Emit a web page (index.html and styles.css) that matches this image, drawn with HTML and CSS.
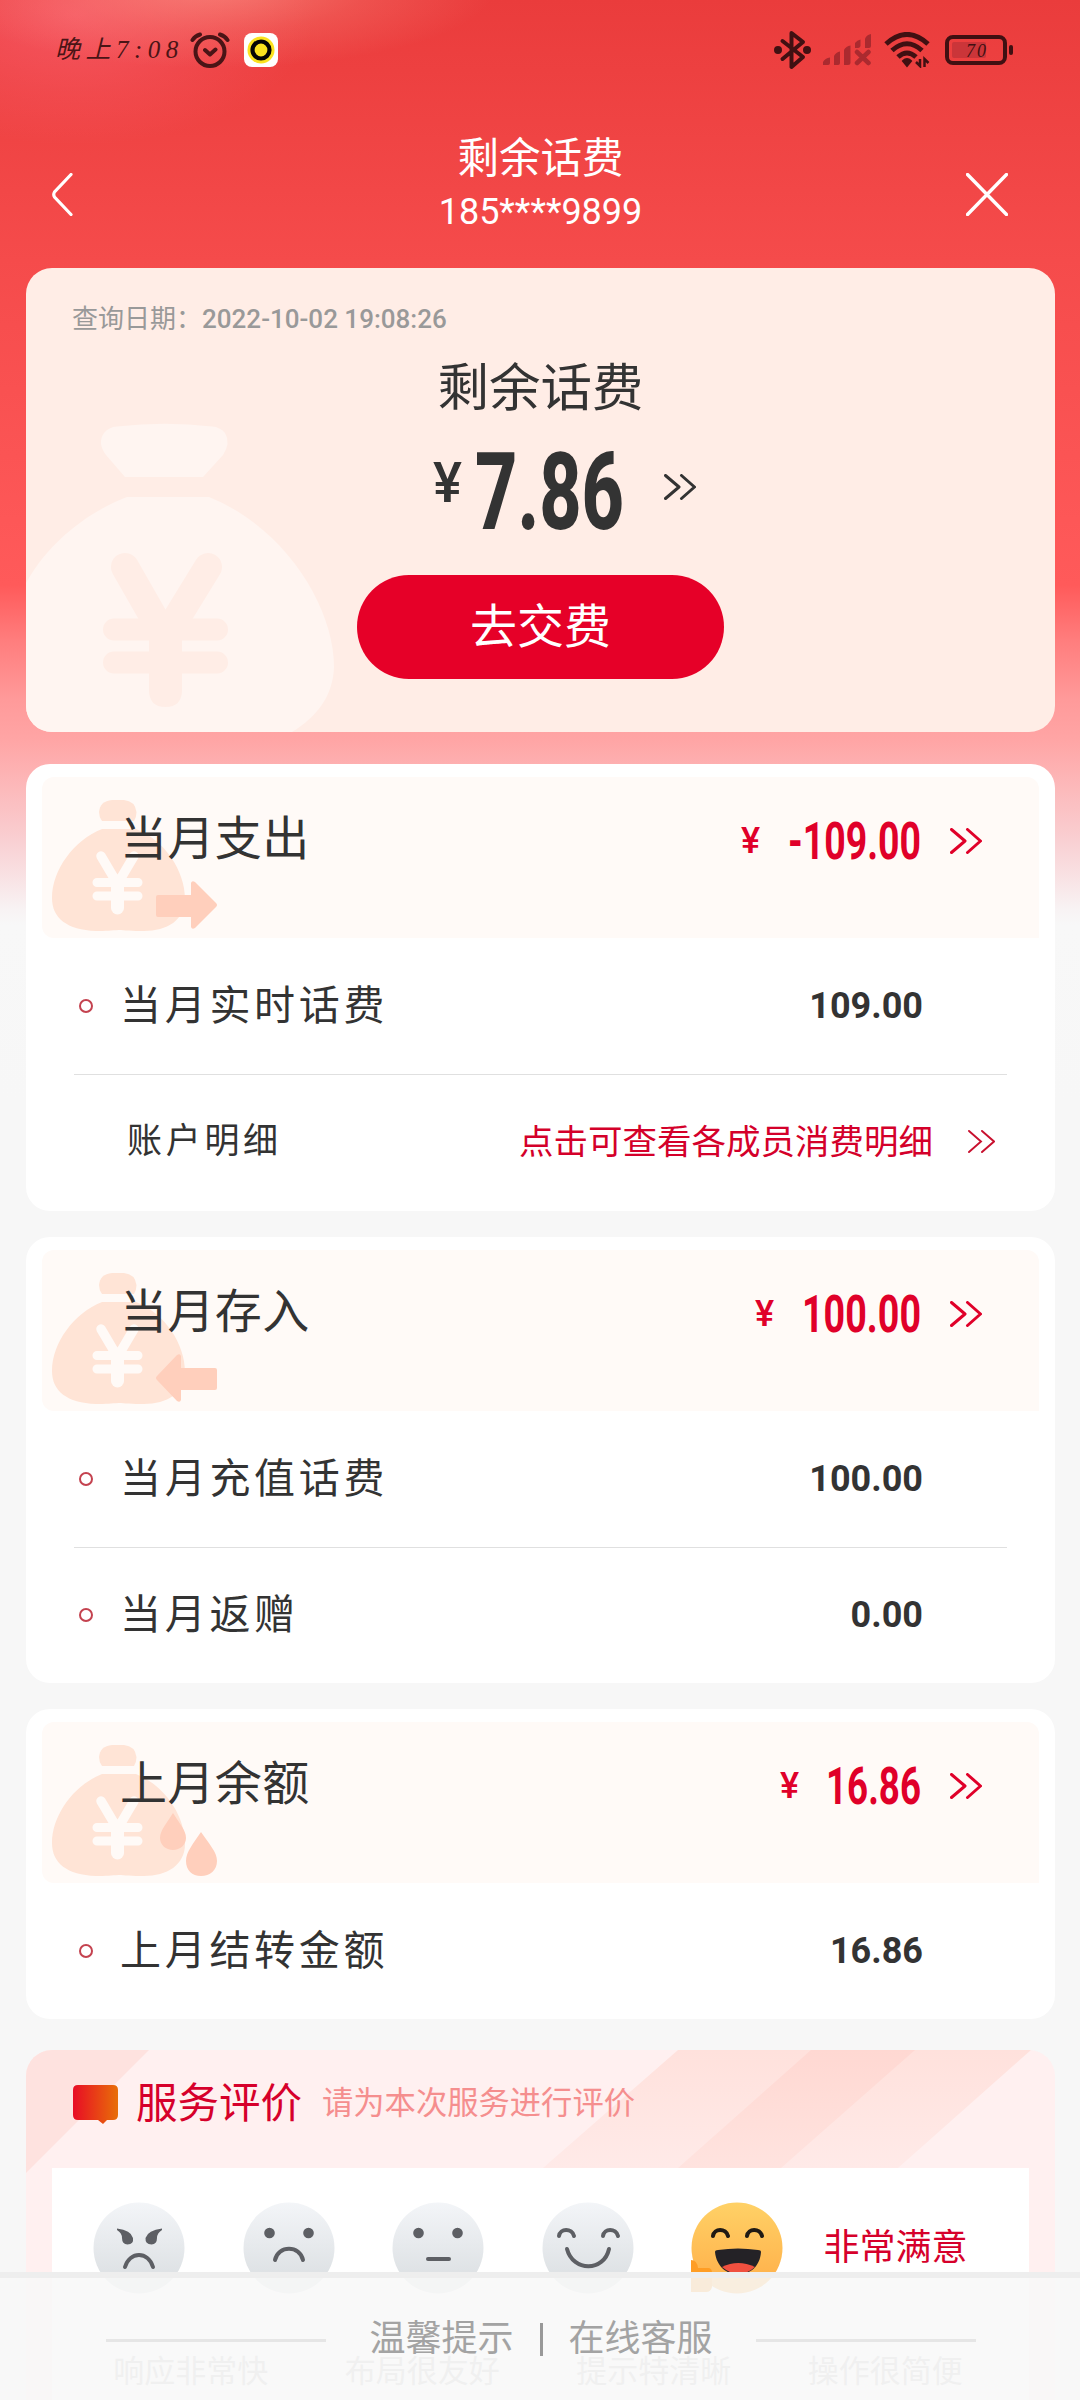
FILE: index.html
```html
<!DOCTYPE html>
<html lang="zh-CN">
<head>
<meta charset="utf-8">
<meta name="viewport" content="width=1080">
<title>剩余话费</title>
<link rel="stylesheet" href="styles.css">
</head>
<body>
<svg class="defs" aria-hidden="true">
  <defs>
    <symbol id="more" viewBox="0 0 32 26">
      <path d="M1.500 1.500 L15 13 L1.500 24.500 M17.500 1.500 L30.500 13 L17.500 24.500" fill="none" stroke="currentColor" stroke-width="3" stroke-linecap="round" stroke-linejoin="round"/>
    </symbol>
    <symbol id="bag" viewBox="0 0 170 134">
      <path d="M50 21 Q47 17 47 12 Q48 1 60 0 H72 Q83 1 84.500 12 Q84.500 17 82 21 Z" fill="#ffe4d6"/>
      <path d="M50 29 H84 C112 40 133 70 133 99 C133 120 115 131 92 131 C80 131 72 130.500 66.500 130 C60 130.500 54 131 44 131 C15 130 0 118 0 98 C0 70 22 40 50 29 Z" fill="#ffe4d6"/>
      <g fill="none" stroke="#fffaf7" stroke-linecap="round">
        <path d="M49 56 L65.500 84 L82 56" stroke-width="9.500"/>
        <path d="M45 82.500 H86 M45 96 H86" stroke-width="9"/>
        <path d="M65.500 82 V108" stroke-width="13"/>
      </g>
    </symbol>
    <linearGradient id="grayFace" x1="0" y1="0" x2="0" y2="1">
      <stop offset="0" stop-color="#f3f5f8"/><stop offset=".9" stop-color="#dbdfe2"/>
    </linearGradient>
    <linearGradient id="goldFace" x1="0" y1="0" x2="0" y2="1">
      <stop offset="0" stop-color="#ffd166"/><stop offset="1" stop-color="#ffac47"/>
    </linearGradient>
    <linearGradient id="bubble"><stop offset="0" stop-color="#e80c25"/><stop offset="1" stop-color="#e86f08"/></linearGradient>
    <linearGradient id="stripe" x1="0" y1="0" x2="0" y2="1"><stop offset="0" stop-color="#ffe1dc"/><stop offset="1" stop-color="#ffeae8"/></linearGradient>
    <linearGradient id="stripeDark" x1="0" y1="0" x2="0" y2="1"><stop offset="0" stop-color="#ffd8d2"/><stop offset="1" stop-color="#ffe3df"/></linearGradient>
  </defs>
</svg>

<div class="screen">
  <div class="status">
    <span class="clock">晚上7:08</span>
    <svg class="alarm" viewBox="0 0 40 36" fill="none" stroke="#4a1416" stroke-width="4" stroke-linecap="round" stroke-linejoin="round">
      <circle cx="20" cy="19.500" r="14.500"/><path d="M2.500 8 Q5 4 10 2.500 M37.500 8 Q35 4 30 2.500 M15 18 L20 22.500 L25.500 17.500"/>
    </svg>
    <svg class="app" viewBox="0 0 34 34">
      <rect width="34" height="34" rx="8" fill="#fff"/><circle cx="17" cy="17" r="13.500" fill="#fbe21f"/><circle cx="17" cy="17" r="8.500" fill="#fbe21f" stroke="#050505" stroke-width="4.200"/>
    </svg>
    <div class="signals">
      <svg width="37" height="40" viewBox="0 0 37 40" fill="none" stroke="#401012" stroke-width="4" stroke-linecap="round" stroke-linejoin="round">
        <path d="M8.500 11 L29 27 L17.500 37 V3 L29 12 L8.500 29"/><circle cx="4" cy="20" r="2" fill="#401012"/><circle cx="33" cy="20" r="2" fill="#401012"/>
      </svg>
      <svg class="bars" width="49" height="32" viewBox="0 0 49 32" fill="#ab2a2f">
        <path d="M0 31 V28 Q2 24 7 23.500 V29 Q7 31 5 31Z M11 31 V22 Q13 18 17 17.500 V29 Q17 31 15 31Z M21 31 V16 Q23 12 27.500 11.500 V29 Q27.500 31 25 31Z M32 14 V9 Q34 6 37.500 5.500 V12 Q37 14 35 14Z M42 14 V5 Q43 1 48 0 V12 Q48 14 46 14Z"/>
        <path d="M34 18 L45.500 29 M45.500 18 L34 29" stroke="#ab2a2f" stroke-width="4.500" stroke-linecap="round"/>
      </svg>
      <svg class="wifi" width="47" height="36" viewBox="0 0 47 36" fill="none" stroke="#401012" stroke-width="5">
        <path d="M2 12 Q23 -7 44 12 M8 18.500 Q23 5 38 18.500 M14 25 Q23 17 32 25"/>
        <path d="M19 29 Q23 25 27 29 L23 34Z" fill="#401012" stroke-width="2"/>
        <path d="M36 27 V34 L32 30 M40.500 35 V27 L44.500 31" stroke-width="2.500"/>
      </svg>
      <svg width="69" height="30" viewBox="0 0 69 30">
        <rect x="2" y="2" width="58" height="26" rx="6" fill="none" stroke="#401012" stroke-width="4"/><rect x="7" y="7" width="34" height="16" rx="2" fill="#cb3539"/><rect x="64" y="10" width="4" height="10" rx="2" fill="#401012"/>
        <text x="21" y="21.500" class="level">70</text>
      </svg>
    </div>
  </div>

  <header class="nav">
    <svg width="21" height="43" viewBox="0 0 21 43"><path d="M19 1.500 L2.500 19 Q1 21.500 2.500 24 L19 41.500" fill="none" stroke="#fff" stroke-width="3.200" stroke-linecap="round"/></svg>
    <div class="heading"><h1>剩余话费</h1><p>185****9899</p></div>
    <svg width="42" height="43" viewBox="0 0 42 43"><path d="M1.500 1.500 L40.500 41.500 M40.500 1.500 L1.500 41.500" fill="none" stroke="#fff" stroke-width="3.400" stroke-linecap="round"/></svg>
  </header>

  <section class="balance">
    <svg class="bigbag" viewBox="26 268 310 464">
      <path d="M125 477 L106 455 Q97 443 104 433 Q109 427 117 426.500 Q165 421 212 426.500 Q220 427 225 433 Q231 443 223 455 L203 477Z" fill="#fff5f1"/>
      <path d="M127 497 H209 C286 528 334 608 334 667 C333 695 318 716 292 732 H26 V583 C49 541 90 511 127 497Z" fill="#fff5f1"/>
      <g fill="none" stroke="#ffede6" stroke-linecap="round"><path d="M125 567 L165 637 L208 567" stroke-width="28"/><path d="M114 629.500 H217 M114 662.500 H217" stroke-width="22"/></g>
      <path d="M149 635 H182 V690 Q182 707 165.500 707 Q149 707 149 690Z" fill="#ffede6"/>
    </svg>
    <p class="date">查询日期：<b>2022-10-02 19:08:26</b></p>
    <h2>剩余话费</h2>
    <div class="total">
      <svg width="190" height="80" viewBox="0 0 190 80" class="figure">
        <text x="0" y="51" font-size="55" font-weight="500" textLength="29" lengthAdjust="spacingAndGlyphs">¥</text>
        <text x="42" y="78" font-size="108" textLength="149" lengthAdjust="spacingAndGlyphs" class="heavy">7.86</text>
      </svg>
      <svg class="more-big"><use href="#more"/></svg>
    </div>
    <button class="pay">去交费</button>
  </section>

  <section class="card">
    <div class="band">
      <svg class="bag"><use href="#bag"/><path d="M106 95 H139 V83 Q140 80 143 82 L164 103 Q166 105 164 107 L143 128 Q140 130 139 127 V117 H106 Q104 117 104 115 V97 Q104 95 106 95Z" fill="#ffcfbc"/></svg>
      <h3>当月支出</h3>
      <div class="sum"><span>¥</span>
        <svg width="131" height="38" viewBox="0 0 131 38" class="figure"><text x="0" y="37" font-size="51" textLength="133" lengthAdjust="spacingAndGlyphs">-109.00</text></svg>
        <svg class="more"><use href="#more"/></svg></div>
    </div>
    <div class="row"><i></i><span>当月实时话费</span><b>109.00</b></div>
    <div class="row detail"><span>账户明细</span><a>点击可查看各成员消费明细</a>
      <svg width="27" height="23" viewBox="0 0 27 23"><path d="M1 1 L13 11.500 L1 22 M14 1 L26 11.500 L14 22" fill="none" stroke="#c8102e" stroke-width="1.900" stroke-linecap="round"/></svg></div>
  </section>

  <section class="card">
    <div class="band">
      <svg class="bag"><use href="#bag"/><path d="M163 95 H129 V83 Q128 80 125 82 L105 103 Q103 105 105 107 L125 128 Q128 130 129 127 V117 H163 Q165 117 165 115 V97 Q165 95 163 95Z" fill="#ffcfbc"/></svg>
      <h3>当月存入</h3>
      <div class="sum"><span>¥</span>
        <svg width="117" height="38" viewBox="0 0 117 38" class="figure"><text x="0" y="37" font-size="51" textLength="119" lengthAdjust="spacingAndGlyphs">100.00</text></svg>
        <svg class="more"><use href="#more"/></svg></div>
    </div>
    <div class="row"><i></i><span>当月充值话费</span><b>100.00</b></div>
    <div class="row split"><i></i><span>当月返赠</span><b>0.00</b></div>
  </section>

  <section class="card">
    <div class="band">
      <svg class="bag"><use href="#bag"/><path d="M121 68 C127 78 134 85 134 93 C134 100 128 105 121 105 C114 105 108 100 108 93 C108 85 115 78 121 68Z M149 87 C157 99 165 107 165 116 C165 125 158 131 149 131 C140 131 134 125 134 116 C134 107 141 99 149 87Z" fill="#ffcfbc"/></svg>
      <h3>上月余额</h3>
      <div class="sum"><span>¥</span>
        <svg width="92" height="38" viewBox="0 0 92 38" class="figure"><text x="-1" y="37" font-size="51" textLength="95" lengthAdjust="spacingAndGlyphs">16.86</text></svg>
        <svg class="more"><use href="#more"/></svg></div>
    </div>
    <div class="row"><i></i><span>上月结转金额</span><b>16.86</b></div>
  </section>

  <section class="rating">
    <svg class="stripes" viewBox="0 0 1029 123">
      <path d="M0 0 H123 L0 123Z" fill="#fee2df"/><path d="M652 0 H1005 L872 118 H517Z" fill="url(#stripe)"/><path d="M785 0 H889 L755 118 H652Z" fill="url(#stripeDark)"/>
    </svg>
    <div class="rating-head">
      <svg width="45" height="39" viewBox="0 0 45 39"><path d="M5 0 H40 Q45 0 45 5 V30 Q45 35 40 35 H34 L30 39 L25 35 H5 Q0 35 0 30 V5 Q0 0 5 0Z" fill="url(#bubble)"/></svg>
      <h3>服务评价</h3><p>请为本次服务进行评价</p>
    </div>
    <div class="panel">
      <div class="faces">
        <svg viewBox="0 0 92 92"><circle cx="46" cy="46" r="45.500" fill="url(#grayFace)"/><g fill="#5d5f64"><path d="M24 26.500 Q38 28 40 36 Q41 42 34.500 42.500 Q29 42 29 36 Q29 31 24 28Z M69 26.500 Q55 28 52.500 36 Q52 42 58.500 42.500 Q64 42 64 36 Q64 31 69 28Z"/></g><path d="M32 65 C37 49 55 49 60 65" class="stroke"/></svg>
        <svg viewBox="0 0 92 92"><circle cx="46" cy="46" r="45.500" fill="url(#grayFace)"/><g fill="#5d5f64"><circle cx="26.500" cy="31" r="5.300"/><circle cx="65.500" cy="31" r="5.300"/></g><path d="M32 58 C35 43 57 43 60 58" class="stroke"/></svg>
        <svg viewBox="0 0 92 92"><circle cx="46" cy="46" r="45.500" fill="url(#grayFace)"/><g fill="#5d5f64"><circle cx="26.500" cy="31" r="5.300"/><circle cx="65.500" cy="31" r="5.300"/></g><path d="M36 57 H57" class="stroke"/></svg>
        <svg viewBox="0 0 92 92"><circle cx="46" cy="46" r="45.500" fill="url(#grayFace)"/><path d="M17 34 C18 26 30 26 32 34 M61 34 C62 26 74 26 76 34 M25 47 C31 70 62 70 67 47" class="stroke"/></svg>
        <svg viewBox="0 0 92 92"><circle cx="46" cy="46" r="45.500" fill="url(#goldFace)"/><path d="M22 34 C23 26 35 26 37 34 M56 34 C57 26 69 26 71 34" class="stroke dark"/><path d="M24 50 Q24 48 27 48 Q47 45 67 48 Q70 48 70 50 C68 80 27 80 24 50Z" fill="#242226"/><path d="M31 65 Q47 57 64 65 Q48 79 31 65Z" fill="#f0503f"/><path d="M0 58 Q6 58 7 66 H17 Q21 66 21 71 V85 Q20 90 15 90 H0Z" fill="#ff9d24"/></svg>
        <span>非常满意</span>
      </div>
      <div class="tags"><span>响应非常快</span><span>布局很友好</span><span>提示特清晰</span><span>操作很简便</span></div>
    </div>
  </section>

  <footer class="foot"><hr><span>温馨提示</span><em></em><span>在线客服</span><hr></footer>
</div>
</body>
</html>
```
FILE: styles.css
```css
* { box-sizing: border-box; margin: 0; padding: 0; }
body { width: 1080px; height: 2400px; overflow: hidden; font-family: Roboto, "Noto Sans CJK SC", sans-serif; color: #333; }
svg { display: block; flex: none; }
h1, h2, h3 { font-weight: 400; }
.defs { position: absolute; width: 0; height: 0; }

.screen {
  position: relative; height: 2400px; overflow: hidden;
  background:
    radial-gradient(ellipse 280px 80px at 215px -12px, rgba(255, 165, 150, .55), rgba(255, 165, 150, .2) 55%, transparent),
    radial-gradient(ellipse 240px 130px at 75px 15px, rgba(255, 110, 130, .5), rgba(255, 110, 130, .18) 60%, transparent),
    linear-gradient(#ea3c3c 0, #f54b4b 260px, #ff5a5a 585px, #ff7d7d 640px, #ff9a9a 700px, #ffa5a5 740px, #f9cfd2 840px, #f8f3f4 910px, #f8f8f8 925px, #f7f7f7 1100px);
}

.status { display: flex; align-items: center; height: 100px; padding: 0 66px 0 55px; }
.clock { width: 135px; white-space: nowrap; font: italic 25px/36px "Liberation Serif", "Noto Sans CJK SC", serif; letter-spacing: 5.500px; color: #4a1416; }
.alarm { width: 40px; height: 36px; }
.app { width: 34px; height: 34px; margin-left: 14px; }
.signals { display: flex; align-items: center; margin-left: auto; }
.signals .bars { margin-left: 12px; }
.signals .wifi { margin: 0 14px 0 12px; }
.level { font: italic 18px "Liberation Serif", serif; letter-spacing: 2px; fill: #401012; }

.nav { display: flex; align-items: center; justify-content: space-between; height: 168px; padding: 20px 72px 0 52px; }
.heading { margin: -23px 0 0 42px; text-align: center; color: #fff; }
.heading h1 { font-size: 41.500px; line-height: 58px; }
.heading p { font-size: 36px; line-height: 48px; }

.balance { position: relative; display: flex; flex-direction: column; align-items: center; height: 464px; margin: 0 25px 32px 26px; border-radius: 26px; overflow: hidden; background: #ffede6; }
.bigbag { position: absolute; left: 0; top: 0; width: 310px; height: 464px; }
.balance > :not(.bigbag) { position: relative; }
.date { align-self: flex-start; margin: 31px 0 0 46px; font-size: 26px; line-height: 40px; color: #999; }
.date b { font-weight: 500; }
.balance h2 { margin-top: 15px; font-size: 51.500px; line-height: 70px; }
.figure { font-family: Roboto, sans-serif; font-weight: 700; fill: currentColor; overflow: visible; }
.heavy { font-weight: 800; }
.total { display: flex; align-items: flex-start; margin: 27px 0 0 48px; }
.more-big { width: 32px; height: 26px; margin: 23px 0 0 41px; }
.pay { width: 367px; height: 104px; margin-top: 44px; border: 0; border-radius: 52px; background: #e60028; color: #fff; font: 400 47px/102px Roboto, "Noto Sans CJK SC", sans-serif; }

.card { margin: 0 25px 26px 26px; padding-top: 13px; border-radius: 24px; background: #fff; }
.band { position: relative; display: flex; justify-content: space-between; height: 161px; margin: 0 16px; padding: 0 57px 0 78px; border-radius: 12px 12px 0 12px; background: #fffaf7; line-height: 124px; }
.bag { position: absolute; left: 10px; top: 23px; width: 170px; height: 134px; }
.bag use { width: 170px; height: 134px; }
.band h3 { position: relative; font-size: 47px; letter-spacing: .4px; }
.sum { display: flex; align-items: center; height: 127px; color: #e00029; }
.sum span { margin-right: 28px; font-size: 36px; font-weight: 500; }
.more { width: 32px; height: 26px; margin-left: 31px; }
.row { display: flex; align-items: center; height: 136px; padding: 0 132px 1px 53px; font-size: 41px; line-height: 50px; }
.row i { width: 14px; height: 14px; margin-right: 27px; border: 2px solid #c4424f; border-radius: 50%; }
.row span { letter-spacing: 3.700px; }
.row b { margin-left: auto; font-size: 36px; font-weight: 700; }
.split, .detail { border-top: 1px solid #e0e0e0; margin: 0 48px; padding: 0 84px 1px 5px; }
.detail { height: 137px; padding: 0 12px 3px 53px; font-size: 35px; }
.detail a { margin-left: auto; margin-right: 35px; font-size: 34.500px; color: #d4002a; }

.rating { position: relative; height: 400px; margin: 31px 25px 0 26px; border-radius: 26px; overflow: hidden; background: #fff0f0; }
.stripes { position: absolute; left: 0; top: 0; width: 1029px; height: 123px; }
.rating-head { position: relative; display: flex; align-items: center; height: 118px; padding: 0 0 10px 47px; line-height: 50px; }
.rating-head h3 { margin: 0 20px 0 18px; font-size: 41.500px; color: #d6002b; }
.rating-head p { font-size: 31.300px; color: #f58e8e; }
.panel { position: relative; height: 290px; margin: 0 26px; padding: 34px 30px 0 41px; background: #fff; }
.faces { display: flex; align-items: center; gap: 57.500px; height: 92px; line-height: 50px; }
.faces svg { width: 92px; height: 92px; }
.faces span { margin-left: -17px; font-size: 36px; color: #d6002b; white-space: nowrap; }
.stroke { fill: none; stroke: #5d5f64; stroke-width: 4; stroke-linecap: round; }
.dark { stroke: #1f1a14; }
.tags { display: flex; gap: 16px; margin: 53px 0 0 -10px; }
.tags span { flex: none; width: 215.500px; height: 56px; border-radius: 5px; text-align: center; font-size: 31px; line-height: 49px; color: #bbb; background: #fbfbfb; }

.foot { position: absolute; left: 0; right: 0; bottom: 0; display: flex; align-items: center; justify-content: center; height: 128px; padding-left: 2px; border-top: 6px solid #eee; background: rgba(248, 248, 248, .86); background-clip: padding-box; color: #a3a3a3; font-size: 36px; }
.foot hr { width: 220px; height: 3px; border: 0; background: #e6e6e6; margin: 3px 43px 0; }
.foot span { line-height: 50px; }
.foot em { width: 3px; height: 33px; margin: 0 26px; background: #999; }
```
